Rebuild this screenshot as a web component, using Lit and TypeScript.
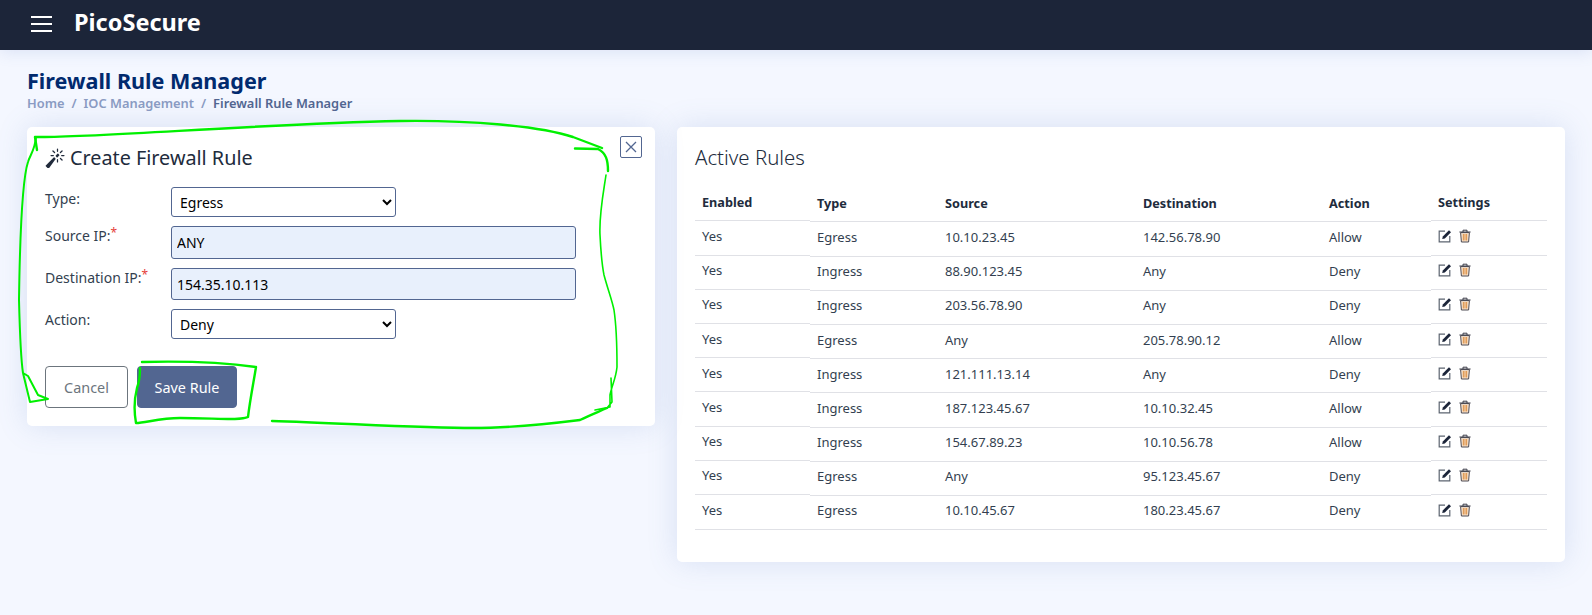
import { LitElement, css, html, svg } from 'lit';
import { customElement } from 'lit/decorators.js';

type Rule = { type: string; source: string; destination: string; action: string };

const rules: Rule[] = [
  { type: 'Egress', source: '10.10.23.45', destination: '142.56.78.90', action: 'Allow' },
  { type: 'Ingress', source: '88.90.123.45', destination: 'Any', action: 'Deny' },
  { type: 'Ingress', source: '203.56.78.90', destination: 'Any', action: 'Deny' },
  { type: 'Egress', source: 'Any', destination: '205.78.90.12', action: 'Allow' },
  { type: 'Ingress', source: '121.111.13.14', destination: 'Any', action: 'Deny' },
  { type: 'Ingress', source: '187.123.45.67', destination: '10.10.32.45', action: 'Allow' },
  { type: 'Ingress', source: '154.67.89.23', destination: '10.10.56.78', action: 'Allow' },
  { type: 'Egress', source: 'Any', destination: '95.123.45.67', action: 'Deny' },
  { type: 'Egress', source: '10.10.45.67', destination: '180.23.45.67', action: 'Deny' },
];

const wand = svg`<path d="M9.5 2.672a.5.5 0 1 0 1 0V.843a.5.5 0 0 0-1 0v1.829Zm4.5.035A.5.5 0 0 0 13.293 2L12 3.293a.5.5 0 1 0 .707.707L14 2.707ZM7.293 4A.5.5 0 1 0 8 3.293L6.707 2A.5.5 0 0 0 6 2.707L7.293 4Zm-.621 2.5a.5.5 0 1 0 0-1H4.843a.5.5 0 1 0 0 1h1.829Zm8.485 0a.5.5 0 1 0 0-1h-1.829a.5.5 0 0 0 0 1h1.829ZM13.293 10A.5.5 0 1 0 14 9.293L12.707 8a.5.5 0 1 0-.707.707L13.293 10ZM9.5 11.157a.5.5 0 0 0 1 0V9.328a.5.5 0 0 0-1 0v1.829Zm1.854-5.097a.5.5 0 0 0 0-.706l-.708-.708a.5.5 0 0 0-.707 0L8.646 5.94a.5.5 0 0 0 0 .707l.708.708a.5.5 0 0 0 .707 0l1.293-1.293Zm-3 3a.5.5 0 0 0 0-.706l-.708-.708a.5.5 0 0 0-.707 0L.646 13.94a.5.5 0 0 0 0 .707l1.708 1.708a.5.5 0 0 0 .707 0L8.354 9.06Z"/>`;

@customElement('app-root')
export class AppRoot extends LitElement {
  static styles = css`
    :host {
      display: block;
      position: relative;
      height: 615px;
      overflow: hidden;
      background: #f4f7ff;
      font-family: 'Noto Sans', 'Open Sans', sans-serif;
      color: #212b3c;
    }
    .topbar {
      position: relative;
      box-sizing: border-box;
      height: 50px;
      background: #1c2539;
      display: flex;
      align-items: center;
      padding: 0 0 3px 31px;
      gap: 22px;
      color: #fff;
      box-shadow: 0 2px 16px rgba(90, 120, 190, 0.16);
    }
    .burger {
      width: 21px;
      height: 16px;
      display: flex;
      flex-direction: column;
      justify-content: space-between;
    }
    .burger span {
      height: 2px;
      background: #fff;
    }
    .brand {
      font-size: 23.5px;
      font-weight: 700;
      line-height: 30px;
      margin-top: -3px;
    }
    .page {
      padding: 19px 27px 0;
    }
    h1 {
      margin: 0;
      font-size: 21.6px;
      line-height: 24px;
      font-weight: 700;
      color: #012a6e;
    }
    .crumbs {
      margin-top: 1px;
      display: flex;
      gap: 7px;
      font-size: 12.85px;
      line-height: 18px;
      font-weight: 600;
      color: #8b9cc3;
    }
    .crumbs b {
      font-weight: 600;
      color: #526691;
    }
    .columns {
      display: flex;
      align-items: flex-start;
      gap: 22px;
      margin-top: 15px;
    }
    .card {
      background: #fff;
      border-radius: 5px;
      box-shadow: 0 0 30px rgba(90, 120, 190, 0.18);
    }
    .create {
      position: relative;
      width: 628px;
      height: 299px;
      box-sizing: border-box;
      padding: 17px 18px 14px;
    }
    .active {
      width: 888px;
      height: 435px;
      box-sizing: border-box;
      padding: 16px 18px 14px;
    }
    h2 {
      margin: 0;
      font-size: 19.8px;
      line-height: 28px;
      font-weight: 400;
      display: flex;
      align-items: center;
      gap: 5px;
    }
    .active h2 {
      font-size: 20.4px;
      font-weight: 300;
    }
    h2 svg {
      width: 20px;
      height: 20px;
      fill: currentColor;
    }
    .close {
      position: absolute;
      top: 9px;
      right: 13px;
      width: 22px;
      height: 22px;
      box-sizing: border-box;
      padding: 0;
      display: flex;
      align-items: center;
      justify-content: center;
      background: #fff;
      border: 1px solid #526691;
      border-radius: 2px;
    }
    .close svg {
      width: 12px;
      height: 12px;
      stroke: #526691;
      stroke-width: 1.3;
      fill: none;
    }
    .form {
      margin-top: 15px;
      display: grid;
      grid-template-columns: 126px 1fr;
      row-gap: 9px;
      font-size: 14px;
    }
    label {
      line-height: 20px;
      color: #333f50;
    }
    .type-label {
      padding-top: 2px;
    }
    .action-label {
      padding-top: 1px;
    }
    label i {
      font-style: normal;
      color: #e5403a;
      font-size: 12px;
      position: relative;
      top: -4px;
    }
    select,
    input {
      box-sizing: border-box;
      font-family: inherit;
      font-size: 14px;
      color: #000;
      border: 1px solid #526691;
      border-radius: 3px;
      outline: none;
    }
    select {
      display: block;
      width: 225px;
      height: 30px;
      background: #fff;
      padding-left: 4px;
    }
    input {
      display: block;
      width: 405px;
      background: #e8f0fc;
      padding: 0 5px;
    }
    .source {
      height: 33px;
    }
    .dest {
      height: 32px;
    }
    .buttons {
      margin-top: 27px;
      display: flex;
      gap: 9px;
    }
    .buttons button {
      height: 42px;
      font-family: inherit;
      font-size: 14.4px;
      border-radius: 4px;
      box-sizing: border-box;
    }
    .cancel {
      width: 83px;
      background: #fff;
      border: 1px solid #6c757d;
      color: #6c757d;
    }
    .save {
      width: 100px;
      background: #526691;
      border: 1px solid #526691;
      color: #fff;
    }
    .table {
      margin-top: 14px;
      display: grid;
      grid-template-columns: 115px 128px 198px 186px 109px 1fr;
      font-size: 13px;
      color: #333f50;
    }
    .cell {
      height: 34.2px;
      box-sizing: border-box;
      padding: 0 7px 4px;
      display: flex;
      align-items: center;
      gap: 6px;
      border-bottom: 1px solid #e0e1e6;
    }
    .cell.head {
      height: 37.4px;
      padding-bottom: 1px;
      font-size: 12.7px;
      font-weight: 700;
      color: #212b3c;
    }
    .raised {
      margin-top: -1px;
      margin-bottom: 1px;
    }
    .cell.closing {
      height: 35.2px;
      margin-bottom: 0;
    }
    .cell svg {
      width: 14px;
      height: 14px;
    }
    .scribble {
      position: absolute;
      inset: 0;
      width: 100%;
      height: 100%;
      pointer-events: none;
      fill: none;
      stroke: #00f000;
      stroke-linecap: round;
      stroke-linejoin: round;
    }
  `;

  renderEdit() {
    return html`<svg viewBox="0 0 14 14">
      <path d="M7 2.200H1.200v10.600h10.600V7" fill="none" stroke="#5c6470" stroke-width="1.200" />
      <path d="M4.200 10l.6-2.600L11 1.200l2 2-6.200 6.200z" fill="#1c2539" />
    </svg>`;
  }

  renderTrash() {
    return html`<svg viewBox="0 0 14 14">
      <path d="M2.600 3.600l.8 9.400h7.200l.8-9.400z" fill="#fbe6d0" stroke="#4d4a52" stroke-width="1" />
      <path d="M1.400 3h11.200M5 3V1.200h4V3" fill="none" stroke="#3d3f4a" stroke-width="1" />
      <path d="M5.300 5v6.500M7 5v6.500M8.700 5v6.500" fill="none" stroke="#d98b3e" stroke-width="1" />
    </svg>`;
  }

  renderRow(rule: Rule, last: boolean) {
    const raised = last ? 'cell raised closing' : 'cell raised';
    return html`
      <div class=${raised}>Yes</div>
      <div class="cell">${rule.type}</div>
      <div class="cell">${rule.source}</div>
      <div class="cell">${rule.destination}</div>
      <div class="cell">${rule.action}</div>
      <div class=${raised}>${this.renderEdit()}${this.renderTrash()}</div>
    `;
  }

  render() {
    return html`
      <div class="topbar">
        <div class="burger"><span></span><span></span><span></span></div>
        <div class="brand">PicoSecure</div>
      </div>
      <div class="page">
        <h1>Firewall Rule Manager</h1>
        <div class="crumbs">
          <span>Home</span><span>/</span><span>IOC Management</span><span>/</span><b>Firewall Rule Manager</b>
        </div>
        <div class="columns">
          <section class="card create">
            <h2><svg viewBox="0 0 16 16">${wand}</svg>Create Firewall Rule</h2>
            <button class="close" aria-label="Close">
              <svg viewBox="0 0 12 12"><path d="M1 1l10 10M11 1L1 11" /></svg>
            </button>
            <div class="form">
              <label class="type-label">Type:</label>
              <select><option>Egress</option><option>Ingress</option></select>
              <label>Source IP:<i>*</i></label>
              <input class="source" value="ANY" />
              <label>Destination IP:<i>*</i></label>
              <input class="dest" value="154.35.10.113" />
              <label class="action-label">Action:</label>
              <select><option>Deny</option><option>Allow</option></select>
            </div>
            <div class="buttons">
              <button class="cancel">Cancel</button>
              <button class="save">Save Rule</button>
            </div>
          </section>
          <section class="card active">
            <h2>Active Rules</h2>
            <div class="table">
              <div class="cell head raised">Enabled</div>
              <div class="cell head">Type</div>
              <div class="cell head">Source</div>
              <div class="cell head">Destination</div>
              <div class="cell head">Action</div>
              <div class="cell head raised">Settings</div>
              ${rules.map((r, i) => this.renderRow(r, i === rules.length - 1))}
            </div>
          </section>
        </div>
      </div>
      <svg class="scribble" viewBox="0 0 1592 615">
        <path stroke-width="2.4" d="M37 150L35 137L45 137C120 136 260 124 400 121C470 120 540 126 573 137L602 148" />
        <path stroke-width="2.4" d="M575 148.500L598 149C606 153 608 160 608 171" />
        <path stroke-width="1.6" d="M606 175C603 195 599 215 600 235C601 255 602 265 604 275C608 290 612 300 614 310C617 330 617 350 617 367C616 378 612 385 610 395L610 407L595 410L607 408L612 402L611 378" />
        <path stroke-width="2.4" d="M607 408C598 412 590 415 580 420C540 425 510 428 473 428C420 428 340 423 272 421" />
        <path stroke-width="2" d="M36 137C35 150 30 155 28 162C22 180 20 230 19 300C20 340 21 360 23 373L30 402L48 399L38 395L28 376L23 373" />
        <path stroke-width="2.4" d="M142 362C180 361 220 362 256 367C254 380 250 400 248 417C240 421 215 418 180 418C160 418 145 423 136 423C134 412 134 400 137 388C140 380 140 372 140 368" />
      </svg>
    `;
  }
}
